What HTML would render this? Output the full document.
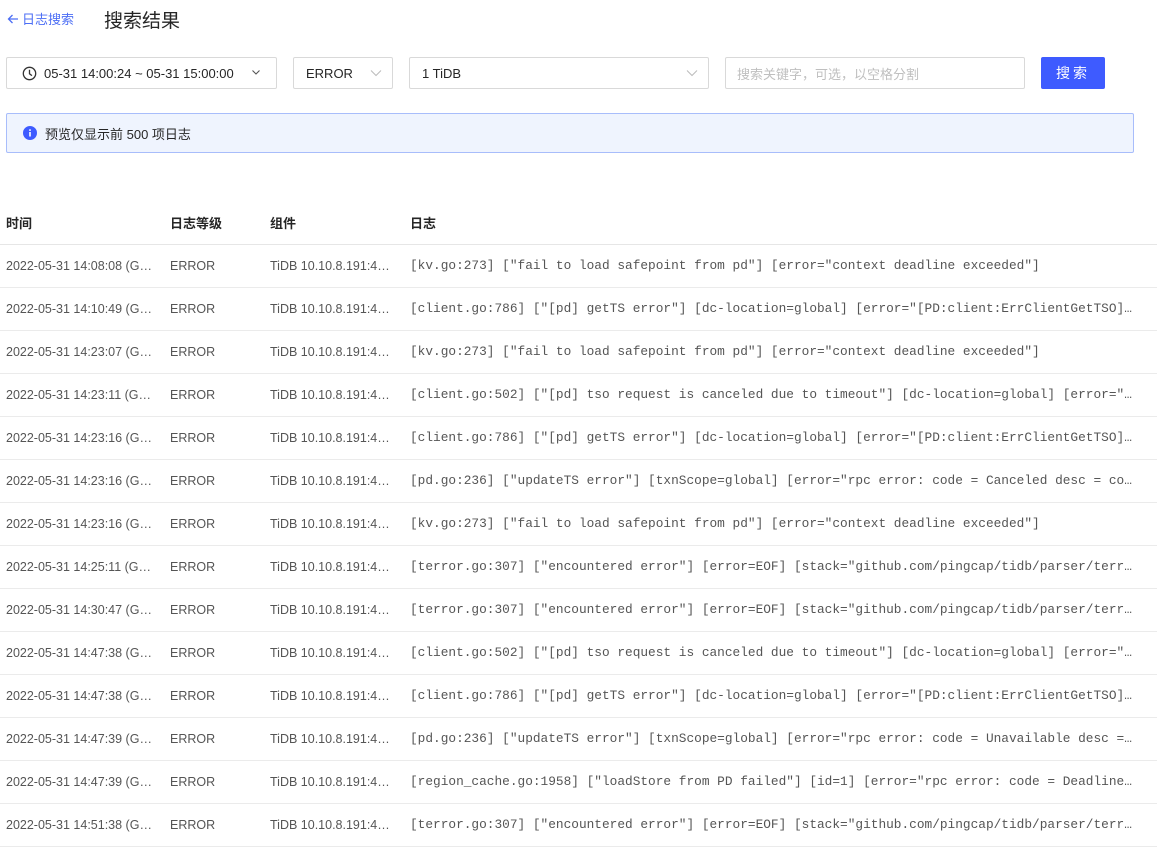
<!DOCTYPE html>
<html><head><meta charset="utf-8"><style>
*{box-sizing:border-box;margin:0;padding:0}
body{width:1157px;height:831px;overflow:hidden;background:#fff;font-family:"Liberation Sans","Noto Sans CJK SC",sans-serif;color:#262626;font-size:13px;position:relative}
.abs{position:absolute}
.box{position:absolute;border:1px solid #d9d9d9;border-radius:2px;height:32px;top:57px;background:#fff;display:flex;align-items:center;font-size:13px}
.chev{position:absolute;right:10px;top:9px}
table{position:absolute;top:200px;left:0;width:1157px;border-collapse:collapse;table-layout:fixed}
td,th{height:43px;border-bottom:1px solid #ebebeb;text-align:left;padding:0 9px 0 6px;white-space:nowrap;overflow:hidden;text-overflow:ellipsis;font-size:12.5px;color:#555}
th{height:44px;border-bottom:1px solid #e6e6e6;font-weight:bold;color:#262626;font-size:13px;padding-top:2px}
td.m{font-family:"Liberation Mono",monospace;font-size:12.8px;color:#555;padding-right:22px}
</style></head><body>
<div class="abs" style="left:7px;top:9px;color:#4c6ef5;font-size:13px;display:flex;align-items:center;gap:3px">
<svg width="12" height="12" viewBox="0 0 12 12"><path d="M11 6H1.5M5.5 2L1.5 6l4 4" fill="none" stroke="#4c6ef5" stroke-width="1.3"/></svg>日志搜索</div>
<div class="abs" style="left:104px;top:6px;font-size:19px;color:#262626">搜索结果</div>

<div class="box" style="left:6px;width:271px;padding-left:15px">
<svg width="15" height="15" viewBox="0 0 16 16" style="margin-right:7px"><circle cx="8" cy="8" r="6.6" fill="none" stroke="#333" stroke-width="1.4"/><path d="M8 4v4.3l2.6 2" fill="none" stroke="#333" stroke-width="1.4"/></svg>
05-31 14:00:24 ~ 05-31 15:00:00
<svg class="chev" style="right:15px" width="10" height="10" viewBox="0 0 10 10"><path d="M1.5 3.5L5 7l3.5-3.5" fill="none" stroke="#555" stroke-width="1.1"/></svg></div>
<div class="box" style="left:293px;width:100px;padding-left:12px">ERROR
<svg class="chev" width="12" height="12" viewBox="0 0 12 12"><path d="M1 3.5L6 8.5l5-5" fill="none" stroke="#bbb" stroke-width="1"/></svg></div>
<div class="box" style="left:409px;width:300px;padding-left:12px">1 TiDB
<svg class="chev" width="12" height="12" viewBox="0 0 12 12"><path d="M1 3.5L6 8.5l5-5" fill="none" stroke="#bbb" stroke-width="1"/></svg></div>
<div class="box" style="left:725px;width:300px;padding-left:11px;color:#bfbfbf">搜索关键字，可选，以空格分割</div>
<div class="abs" style="left:1041px;top:57px;width:64px;height:32px;background:#3e5bff;border-radius:2px;color:#fff;font-size:14px;display:flex;align-items:center;justify-content:center;letter-spacing:3px">搜索</div>

<div class="abs" style="left:6px;top:113px;width:1128px;height:40px;background:#eff4fe;border:1px solid #a8bdfb;border-radius:2px;display:flex;align-items:center;padding-left:16px">
<svg width="14" height="14" viewBox="0 0 14 14" style="margin-right:8px"><circle cx="7" cy="7" r="7" fill="#3e5bff"/><rect x="6.2" y="6" width="1.6" height="4.5" fill="#fff"/><rect x="6.2" y="3.3" width="1.6" height="1.6" fill="#fff"/></svg>
预览仅显示前 500 项日志</div>

<table>
<colgroup><col style="width:164px"><col style="width:100px"><col style="width:140px"><col></colgroup>
<tr><th>时间</th><th>日志等级</th><th>组件</th><th>日志</th></tr>
<tr><td>2022-05-31 14:08:08 (GMT+8)</td><td>ERROR</td><td>TiDB 10.10.8.191:4000</td><td class="m">[kv.go:273] ["fail to load safepoint from pd"] [error="context deadline exceeded"]</td></tr>
<tr><td>2022-05-31 14:10:49 (GMT+8)</td><td>ERROR</td><td>TiDB 10.10.8.191:4000</td><td class="m">[client.go:786] ["[pd] getTS error"] [dc-location=global] [error="[PD:client:ErrClientGetTSO]xxx"]</td></tr>
<tr><td>2022-05-31 14:23:07 (GMT+8)</td><td>ERROR</td><td>TiDB 10.10.8.191:4000</td><td class="m">[kv.go:273] ["fail to load safepoint from pd"] [error="context deadline exceeded"]</td></tr>
<tr><td>2022-05-31 14:23:11 (GMT+8)</td><td>ERROR</td><td>TiDB 10.10.8.191:4000</td><td class="m">[client.go:502] ["[pd] tso request is canceled due to timeout"] [dc-location=global] [error="xxxx"]</td></tr>
<tr><td>2022-05-31 14:23:16 (GMT+8)</td><td>ERROR</td><td>TiDB 10.10.8.191:4000</td><td class="m">[client.go:786] ["[pd] getTS error"] [dc-location=global] [error="[PD:client:ErrClientGetTSO]xxx"]</td></tr>
<tr><td>2022-05-31 14:23:16 (GMT+8)</td><td>ERROR</td><td>TiDB 10.10.8.191:4000</td><td class="m">[pd.go:236] ["updateTS error"] [txnScope=global] [error="rpc error: code = Canceled desc = context"]</td></tr>
<tr><td>2022-05-31 14:23:16 (GMT+8)</td><td>ERROR</td><td>TiDB 10.10.8.191:4000</td><td class="m">[kv.go:273] ["fail to load safepoint from pd"] [error="context deadline exceeded"]</td></tr>
<tr><td>2022-05-31 14:25:11 (GMT+8)</td><td>ERROR</td><td>TiDB 10.10.8.191:4000</td><td class="m">[terror.go:307] ["encountered error"] [error=EOF] [stack="github.com/pingcap/tidb/parser/terror"]</td></tr>
<tr><td>2022-05-31 14:30:47 (GMT+8)</td><td>ERROR</td><td>TiDB 10.10.8.191:4000</td><td class="m">[terror.go:307] ["encountered error"] [error=EOF] [stack="github.com/pingcap/tidb/parser/terror"]</td></tr>
<tr><td>2022-05-31 14:47:38 (GMT+8)</td><td>ERROR</td><td>TiDB 10.10.8.191:4000</td><td class="m">[client.go:502] ["[pd] tso request is canceled due to timeout"] [dc-location=global] [error="xxxx"]</td></tr>
<tr><td>2022-05-31 14:47:38 (GMT+8)</td><td>ERROR</td><td>TiDB 10.10.8.191:4000</td><td class="m">[client.go:786] ["[pd] getTS error"] [dc-location=global] [error="[PD:client:ErrClientGetTSO]xxx"]</td></tr>
<tr><td>2022-05-31 14:47:39 (GMT+8)</td><td>ERROR</td><td>TiDB 10.10.8.191:4000</td><td class="m">[pd.go:236] ["updateTS error"] [txnScope=global] [error="rpc error: code = Unavailable desc = xx"]</td></tr>
<tr><td>2022-05-31 14:47:39 (GMT+8)</td><td>ERROR</td><td>TiDB 10.10.8.191:4000</td><td class="m">[region_cache.go:1958] ["loadStore from PD failed"] [id=1] [error="rpc error: code = DeadlineExceeded"]</td></tr>
<tr><td>2022-05-31 14:51:38 (GMT+8)</td><td>ERROR</td><td>TiDB 10.10.8.191:4000</td><td class="m">[terror.go:307] ["encountered error"] [error=EOF] [stack="github.com/pingcap/tidb/parser/terror"]</td></tr>
</table>
</body></html>
